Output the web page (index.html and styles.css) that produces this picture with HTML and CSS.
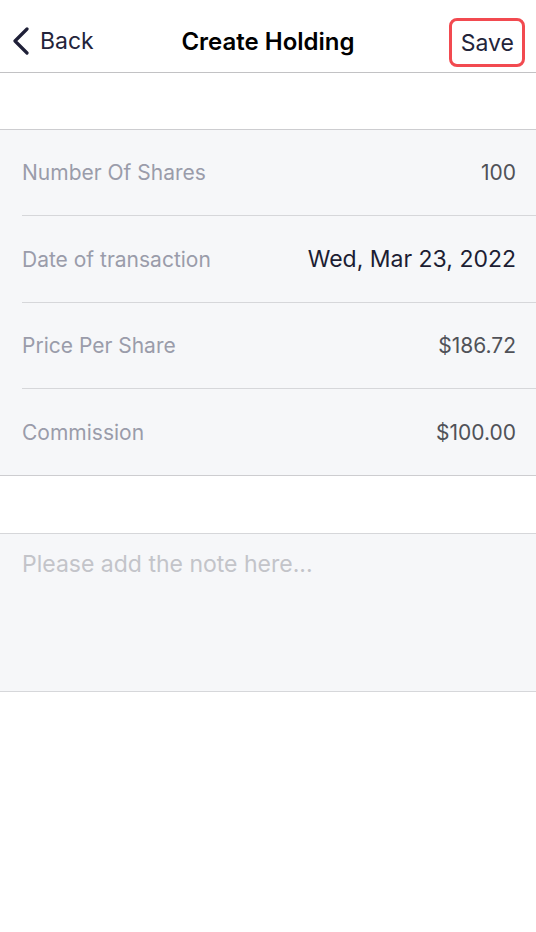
FILE: index.html
```html
<!DOCTYPE html>
<html>
<head>
<meta charset="utf-8">
<link rel="stylesheet" href="styles.css">
</head>
<body>
<div class="screen">
  <header class="nav">
    <div class="back">
      <svg class="chev" width="18" height="28" viewBox="0 0 18 28"><path d="M15 2 L3 14 L15 26" fill="none" stroke="#1f2038" stroke-width="3.2" stroke-linecap="round" stroke-linejoin="round"/></svg>
      <span class="back-text">Back</span>
    </div>
    <div class="title">Create Holding</div>
    <div class="save">Save</div>
  </header>
  <div class="spacer"></div>
  <section class="group">
    <div class="row"><span class="label">Number Of Shares</span><span class="value">100</span></div>
    <div class="row tall"><span class="label">Date of transaction</span><span class="value date">Wed, Mar 23, 2022</span></div>
    <div class="row"><span class="label">Price Per Share</span><span class="value">$186.72</span></div>
    <div class="row"><span class="label">Commission</span><span class="value">$100.00</span></div>
  </section>
  <div class="spacer2"></div>
  <section class="note">
    <div class="placeholder">Please add the note here...</div>
  </section>
</div>
</body>
</html>
```
FILE: styles.css
```css
html, body { margin: 0; padding: 0; background: #ffffff; }
body { font-family: Inter, "Noto Sans", sans-serif; }
.screen { width: 536px; min-height: 932px; background: #fff; }
.nav {
  height: 73px;
  border-bottom: 1px solid #c2c2c4;
  display: flex;
  align-items: center;
  justify-content: space-between;
  padding: 10px 11px 0 12px;
  position: relative;
  box-sizing: border-box;
}
.back { display: flex; align-items: center; gap: 10px; color: #23243a; }
.chev { display: block; margin-top: 0; }
.back-text { font-size: 23px; color: #23243a; }
.title {
  position: absolute; left: 0; right: 0; top: 10px; bottom: 0;
  display: flex; align-items: center; justify-content: center;
  font-size: 24px; font-weight: 600; color: #000; pointer-events: none;
}
.save {
  font-size: 23px; color: #23243a;
  border: 3px solid #f24a50; border-radius: 8px;
  padding: 10px 8px 9px 9px; line-height: 24px;
  margin-top: 2px;
}
.spacer { height: 56px; }
.spacer2 { height: 57px; }
.group {
  background: #f6f7f9;
  border-top: 1px solid #cdcdd0;
  border-bottom: 1px solid #cdcdd0;
  padding-left: 22px;
}
.row {
  height: 86px;
  box-sizing: border-box;
  display: flex; align-items: center; justify-content: space-between;
  padding-right: 20px;
  border-bottom: 1px solid #d6d7da;
}
.row.tall { height: 87px; }
.row:last-child { border-bottom: none; height: 86px; }
.label { font-size: 21px; color: #9a9caa; }
.value { font-size: 21px; color: #505258; }
.value.date { font-size: 23px; color: #1c1d33; }
.note {
  background: #f6f7f9;
  border-top: 1px solid #d6d7da;
  border-bottom: 1px solid #d6d7da;
  height: 159px;
  padding: 16px 22px 0;
  box-sizing: border-box;
}
.placeholder { font-size: 23px; color: #c3c4c9; }
```
